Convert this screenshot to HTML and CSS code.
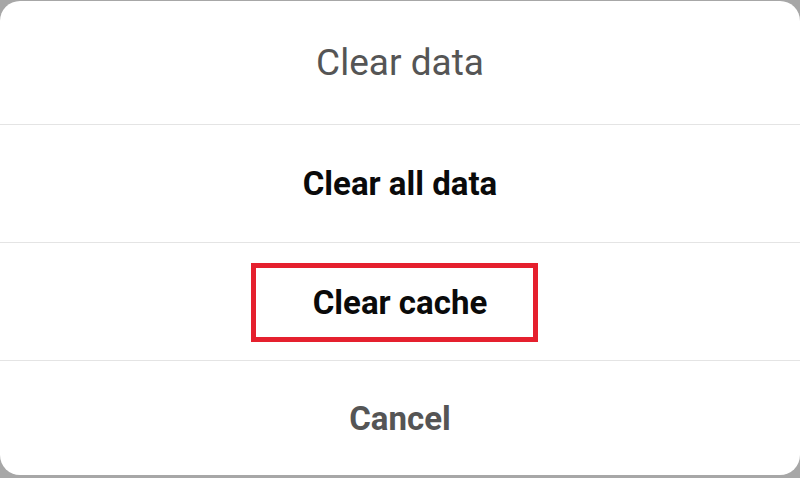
FILE: index.html
```html
<!DOCTYPE html>
<html>
<head>
<meta charset="utf-8">
<link rel="stylesheet" href="styles.css">
</head>
<body>
<div class="screen">
  <div class="dialog">
    <div class="title"><span>Clear data</span></div>
    <div class="option"><span class="label">Clear all data</span></div>
    <div class="option"><span class="label highlight">Clear cache</span></div>
    <div class="option cancel"><span class="label">Cancel</span></div>
  </div>
</div>
</body>
</html>
```
FILE: styles.css
```css
html, body {
  margin: 0;
  padding: 0;
  background: #a7a7a7;
}
.screen {
  width: 800px;
  height: 478px;
  padding-top: 1px;
  box-sizing: border-box;
  font-family: Roboto, "Liberation Sans", sans-serif;
}
.dialog {
  height: 474px;
  background: #ffffff;
  border-radius: 20px;
  display: flex;
  flex-direction: column;
  overflow: hidden;
}
.title {
  height: 123px;
  display: flex;
  align-items: center;
  justify-content: center;
  border-bottom: 1px solid #e4e4e4;
  font-size: 37px;
  color: #555555;
  font-weight: 400;
}
.option {
  height: 117px;
  flex: none;
  display: flex;
  align-items: center;
  justify-content: center;
  border-bottom: 1px solid #e4e4e4;
  font-size: 33px;
  font-weight: 700;
  color: #0a0a0a;
}
.option.cancel {
  border-bottom: none;
  flex: 1;
  color: #555555;
}
.highlight {
  display: flex;
  align-items: center;
  justify-content: center;
  width: 287px;
  height: 79px;
  box-sizing: border-box;
  border: 5px solid #e5202e;
  margin-top: 2px;
  margin-right: 11px;
  padding-left: 11px;
}
```
